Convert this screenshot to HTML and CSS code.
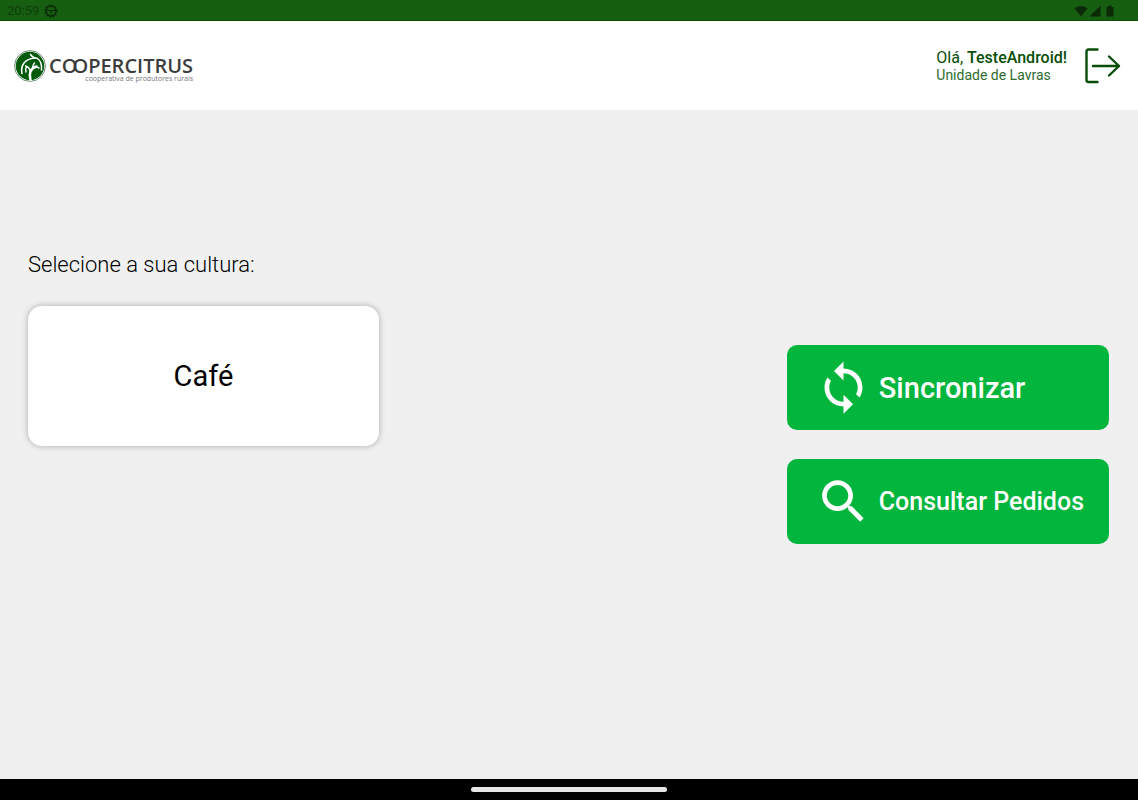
FILE: index.html
```html
<!DOCTYPE html>
<html lang="pt-BR">
<head>
<meta charset="utf-8">
<meta name="viewport" content="width=device-width, initial-scale=1">
<title>Coopercitrus</title>
<link rel="stylesheet" href="styles.css">
</head>
<body>
<div class="status-bar">
  <div class="status-group">
    <span class="clock">20:59</span>
    <svg class="status-gear" viewBox="0 0 14 14" aria-hidden="true">
      <circle cx="7" cy="7" r="6" fill="none" stroke="currentColor" stroke-width="1.4" stroke-dasharray="1.57 1.57"/>
      <circle cx="7" cy="7" r="4.8" fill="none" stroke="currentColor" stroke-width="1.4"/>
      <path d="M2.500 6.500h9M7 6.500v3" fill="none" stroke="currentColor" stroke-width="1.200"/>
    </svg>
  </div>
  <div class="status-icons">
    <svg width="14" height="12" viewBox="0 0 14 12" aria-hidden="true"><path d="M7 11.500.5 3.500C4 .2 10 .2 13.500 3.500z" fill="currentColor"/></svg>
    <svg width="12" height="12" viewBox="0 0 12 12" aria-hidden="true"><path d="M.5 11.500 11.500.5v11z" fill="currentColor"/></svg>
    <svg class="battery" width="8" height="12" viewBox="0 0 8 12" aria-hidden="true"><path d="M.5 2H2.500V.5h3V2h2v9.500h-7z" fill="currentColor"/></svg>
  </div>
</div>

<header class="header">
  <div class="brand">
    <svg class="brand-mark" viewBox="0 0 32 32" aria-hidden="true">
      <circle cx="16" cy="16" r="15.400" fill="#fff" stroke="#6f8f72" stroke-width="1"/>
      <circle cx="16" cy="16" r="14.200" fill="#045a0b"/>
      <g fill="none" stroke="#fff" stroke-linecap="round">
        <path d="M8 23.500C6.500 16 10 9 21 8" stroke-width="1.600"/>
        <path d="M16.500 4.500C18 7 20 8 23.500 8.500 27 11 28 15 27.500 20" stroke-width="1.500"/>
        <path d="M16.500 30C15 24 15.500 18.500 22.500 16.500" stroke-width="2.400"/>
        <path d="M16 21C15.500 18 14 16.500 11.500 16M18.500 18.500C18.500 16 19 14.500 20.500 13M22 16.500l3 1.500M12.500 16.500C11.500 18 11.500 20 12 22" stroke-width="1.400"/>
      </g>
    </svg>
    <div class="brand-text">
      <span class="brand-name">CO<span class="linked">OPERCITRUS</span></span>
      <span class="brand-tagline">cooperativa de produtores rurais</span>
    </div>
  </div>
  <div class="account">
    <div class="user">
      <span class="greeting">Olá, <strong>TesteAndroid!</strong></span>
      <span class="unit">Unidade de Lavras</span>
    </div>
    <button class="logout" type="button" aria-label="Sair">
      <svg width="36" height="36" viewBox="0 0 36 36" aria-hidden="true">
        <path d="M12.500 1.500H3.500Q1.500 1.500 1.500 3.500v28.500Q1.500 34 3.500 34h9M8 18H34M24 8.500l10 9.500-10 9.500" fill="none" stroke="currentColor" stroke-width="2.400" stroke-linecap="round" stroke-linejoin="round"/>
      </svg>
    </button>
  </div>
</header>

<main class="main">
  <section class="cultures">
    <h1 class="prompt">Selecione a sua cultura:</h1>
    <button class="culture-card" type="button">Café</button>
  </section>
  <div class="actions">
    <button class="action action-sync" type="button">
      <svg class="action-icon" viewBox="0 0 24 24" aria-hidden="true"><path fill="currentColor" d="M12 4V1L8 5l4 4V6c3.310 0 6 2.690 6 6 0 1.010-.25 1.970-.7 2.800l1.460 1.460C19.540 15.030 20 13.570 20 12c0-4.420-3.580-8-8-8zm0 14c-3.310 0-6-2.690-6-6 0-1.010.25-1.970.7-2.800L5.240 7.740C4.460 8.970 4 10.430 4 12c0 4.420 3.580 8 8 8v3l4-4-4-4v3z"/></svg>
      Sincronizar
    </button>
    <button class="action action-orders" type="button">
      <svg class="action-icon" viewBox="0 0 24 24" aria-hidden="true"><path fill="currentColor" d="M15.500 14h-.79l-.28-.27C15.410 12.590 16 11.110 16 9.500 16 5.910 13.090 3 9.500 3S3 5.910 3 9.500 5.910 16 9.500 16c1.610 0 3.090-.59 4.230-1.570l.27.28v.79l5 4.990L20.490 19l-4.990-5zm-6 0C7.010 14 5 11.990 5 9.500S7.010 5 9.500 5 14 7.010 14 9.500 11.990 14 9.500 14z"/></svg>
      Consultar Pedidos
    </button>
  </div>
</main>

<div class="nav-bar"><span class="nav-handle"></span></div>
</body>
</html>
```
FILE: styles.css
```css
* {
  box-sizing: border-box;
}

body {
  margin: 0;
  min-height: 100vh;
  display: flex;
  flex-direction: column;
  background: #f0f0f0;
  color: #000;
  font-family: Roboto, sans-serif;
}

button {
  margin: 0;
  border: 0;
  font-family: inherit;
  cursor: pointer;
}

svg {
  display: block;
  flex: none;
}

.status-bar {
  display: flex;
  align-items: center;
  justify-content: space-between;
  height: 21px;
  padding: 2px 24px 0 7px;
  background: #165f10;
  border-bottom: 1px solid #0b4a07;
  color: #0a2a08;
}

.status-group {
  display: flex;
  align-items: center;
  gap: 5px;
}

.clock {
  font-size: 13px;
  line-height: 18px;
  color: #0e3d0b;
}

.status-gear {
  width: 14px;
  height: 14px;
}

.status-icons {
  display: flex;
  align-items: center;
  gap: 1px;
}

.battery {
  margin-left: 4px;
}

.header {
  display: flex;
  align-items: center;
  justify-content: space-between;
  height: 89px;
  padding: 0 17px 0 14px;
  background: #fff;
}

.brand {
  display: flex;
  align-items: center;
  gap: 3px;
}

.brand-mark {
  width: 32px;
  height: 32px;
}

.brand-text {
  display: flex;
  flex-direction: column;
  align-items: flex-end;
  padding-top: 6px;
}

.brand-name {
  font: 600 20px/20px "Open Sans", sans-serif;
  color: #3c3c3c;
}

.linked {
  margin-left: -5px;
}

.brand-tagline {
  font: 400 7px/6px "Open Sans", sans-serif;
  color: #777;
}

.account {
  display: flex;
  align-items: center;
  gap: 18px;
  color: #084d08;
}

.user {
  display: flex;
  flex-direction: column;
  padding-top: 1px;
}

.greeting {
  font-size: 16px;
  line-height: 17px;
}

.greeting strong {
  font-weight: 500;
}

.unit {
  font-size: 14px;
  line-height: 18px;
  color: #2f6b2f;
}

.logout {
  padding: 0;
  background: none;
  color: #084d08;
}

.main {
  flex: 1;
  display: flex;
  align-items: center;
  justify-content: space-between;
  gap: 28px;
  padding: 28px 29px 28px 28px;
}

.cultures {
  display: flex;
  flex-direction: column;
  align-items: flex-start;
  gap: 26px;
  min-height: 390px;
}

.prompt {
  margin: 0;
  font-size: 22px;
  line-height: 30px;
  font-weight: 300;
}

.culture-card {
  width: 351px;
  padding: 52px 28px;
  border-radius: 14px;
  background: #fff;
  box-shadow: 0 0 6px rgba(0, 0, 0, 0.3);
  color: #000;
  font-size: 29px;
  line-height: 36px;
  font-weight: 400;
}

.actions {
  display: flex;
  flex-direction: column;
  gap: 29px;
}

.action {
  display: flex;
  align-items: center;
  gap: 7px;
  padding: 14px 25px 14px 28px;
  border-radius: 10px;
  background: #02b53c;
  color: #fff;
  font-weight: 500;
  white-space: nowrap;
}

.action-sync {
  font-size: 29px;
}

.action-orders {
  font-size: 25px;
}

.action-icon {
  width: 57px;
  height: 57px;
}

.nav-bar {
  display: flex;
  align-items: center;
  justify-content: center;
  height: 21px;
  background: #000;
}

.nav-handle {
  width: 196px;
  height: 5px;
  border-radius: 3px;
  background: #e6e6e6;
}
```
